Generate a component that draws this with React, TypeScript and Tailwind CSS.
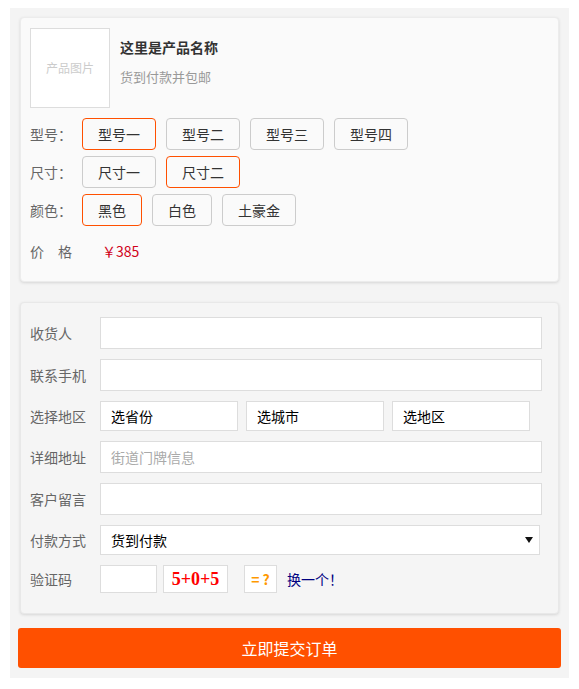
import { useState } from 'react'

const FONT = "font-['Microsoft_YaHei','Noto_Sans_CJK_SC',sans-serif]"

const specs = [
  { label: '型号：', options: ['型号一', '型号二', '型号三', '型号四'], active: 0 },
  { label: '尺寸：', options: ['尺寸一', '尺寸二'], active: 1 },
  { label: '颜色：', options: ['黑色', '白色', '土豪金'], active: 0 },
]

function OptionRow({ label, options, active }: { label: string; options: string[]; active: number }) {
  const [sel, setSel] = useState(active)
  return (
    <div className="flex items-center h-8 mb-[6px]">
      <span className="w-[52px] text-sm text-[#666]">{label}</span>
      <div className="flex gap-[10px]">
        {options.map((o, i) => (
          <button
            key={o}
            onClick={() => setSel(i)}
            className={
              'h-8 px-[15px] rounded-[4px] border text-sm text-[#333] leading-none ' +
              (i === sel ? 'border-[#ff5000]' : 'border-[#ccc]')
            }
          >
            {o}
          </button>
        ))}
      </div>
    </div>
  )
}

function Field({ label, children }: { label: string; children: React.ReactNode }) {
  return (
    <div className="flex items-center mb-[10px]">
      <span className="w-[70px] flex-shrink-0 text-sm text-[#666]">{label}</span>
      {children}
    </div>
  )
}

const inputCls = 'h-8 border border-[#ddd] bg-white text-sm px-[10px] outline-none'

export default function App() {
  return (
    <div className={`bg-white min-h-[689px] ${FONT}`}>
      <div className="mx-[10px] pt-2">
        <div className="bg-[#f4f4f4] px-[10px] pt-[9px] pb-[10px]">
          {/* product card */}
          <div className="bg-[#fafafa] rounded-[4px] border border-[#ececec] shadow-[0_1px_3px_rgba(0,0,0,0.12)] px-[9px] pt-[10px] pb-[20px]">
            <div className="flex mb-[10px]">
              <div className="w-20 h-20 border border-[#ddd] bg-white flex items-center justify-center text-xs text-[#ccc]">
                产品图片
              </div>
              <div className="ml-[10px] pt-[9px]">
                <div className="text-sm font-bold text-[#333] leading-5">这里是产品名称</div>
                <div className="text-[13px] text-[#999] mt-[10px] leading-5">货到付款并包邮</div>
              </div>
            </div>
            {specs.map(s => (
              <OptionRow key={s.label} {...s} />
            ))}
            <div className="flex items-center h-5 mt-[15px]">
              <span className="w-[72px] text-sm text-[#666] tracking-[14px]">价格</span>
              <span className="text-sm text-[#d0021b]">￥385</span>
            </div>
          </div>

          {/* order form */}
          <div className="mt-5 bg-[#f5f5f5] rounded-[4px] border border-[#e8e8e8] shadow-[0_1px_3px_rgba(0,0,0,0.12)] px-[9px] pt-[14px] pb-[10px]">
            <Field label="收货人">
              <input className={`${inputCls} w-[442px]`} />
            </Field>
            <Field label="联系手机">
              <input className={`${inputCls} w-[442px]`} />
            </Field>
            <Field label="选择地区">
              <div className="flex gap-[8px]">
                {['选省份', '选城市', '选地区'].map(t => (
                  <div key={t} className="w-[138px] h-[30px] border border-[#ddd] bg-white flex items-center px-[10px] text-sm text-black">
                    {t}
                  </div>
                ))}
              </div>
            </Field>
            <Field label="详细地址">
              <input className={`${inputCls} w-[442px] placeholder:text-[#aaa]`} placeholder="街道门牌信息" />
            </Field>
            <Field label="客户留言">
              <input className={`${inputCls} w-[442px]`} />
            </Field>
            <Field label="付款方式">
              <div className="w-[440px] h-[30px] border border-[#ddd] bg-white flex items-center justify-between pl-[10px] pr-[6px] text-sm text-black">
                <span>货到付款</span>
                <svg width="8" height="6" viewBox="0 0 8 6">
                  <polygon points="0,0 8,0 4,6" fill="#111" />
                </svg>
              </div>
            </Field>
            <Field label="验证码">
              <div className="flex items-center">
                <input className="w-[57px] h-7 border border-[#ddd] bg-white outline-none" />
                <div className="ml-[6px] w-[65px] h-7 border border-[#ddd] bg-white flex items-center justify-center text-lg font-bold text-[#f00] font-['Liberation_Serif',serif]">
                  5+0+5
                </div>
                <div className="ml-4 w-[33px] h-7 border border-[#ddd] bg-white flex items-center justify-center gap-[3px] text-sm font-bold text-[#f90]">
                  <span>=</span>
                  <span>?</span>
                </div>
                <span className="ml-[10px] text-sm text-[#000080]">换一个！</span>
              </div>
            </Field>
          </div>

          <button className="mt-[14px] -mx-[2px] w-[calc(100%+4px)] h-10 rounded-[3px] bg-[#ff5000] text-white text-base">
            立即提交订单
          </button>
        </div>
      </div>
    </div>
  )
}
